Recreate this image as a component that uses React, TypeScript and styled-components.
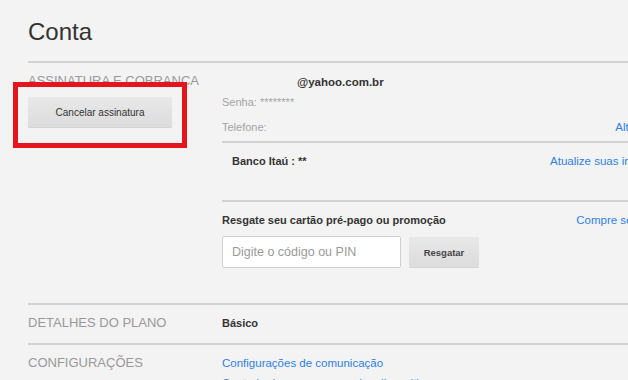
import React from "react";
import styled, { createGlobalStyle } from "styled-components";

const Global = createGlobalStyle`
  html, body {
    margin: 0;
    padding: 0;
    background: #f3f3f3;
    overflow: hidden;
  }
  body {
    font-family: "Liberation Sans", Arial, sans-serif;
    color: #333;
  }
`;

const Page = styled.div`
  width: 733px;
  padding-left: 28px;
`;

const Header = styled.header`
  padding: 17px 0 14px;
  border-bottom: 2px solid #d2d2d2;
`;

const Title = styled.h1`
  margin: 0;
  font-size: 24px;
  line-height: 30px;
  font-weight: 400;
  color: #333;
`;

const Section = styled.section<{ $top: number; $bottom?: number }>`
  display: grid;
  grid-template-columns: 194px 539px;
  border-bottom: 2px solid #d2d2d2;
  padding-top: ${(p) => p.$top}px;
  padding-bottom: ${(p) => p.$bottom ?? 0}px;
`;

const SideCol = styled.div`
  display: flex;
  flex-direction: column;
  align-items: flex-start;
`;

const SectionLabel = styled.h2`
  margin: 0;
  font-size: 13px;
  line-height: 18px;
  font-weight: 400;
  color: #999;
  white-space: nowrap;
`;

const CancelWrap = styled.div`
  position: relative;
  margin-top: 7px;
`;

const PlainButton = styled.button<{ $w: number; $h: number }>`
  display: flex;
  align-items: center;
  justify-content: center;
  width: ${(p) => p.$w}px;
  height: ${(p) => p.$h}px;
  padding: 0;
  border: 0;
  border-radius: 1px;
  background: linear-gradient(180deg, #e8e8e8 0%, #dcdcdc 100%);
  box-shadow: 0 1px 0 rgba(0, 0, 0, 0.12);
  font-family: "Liberation Sans", Arial, sans-serif;
  font-size: 10px;
  color: #333;
  cursor: pointer;
`;

const Highlight = styled.div`
  position: absolute;
  left: -15px;
  top: -15px;
  width: 174px;
  height: 66px;
  box-sizing: border-box;
  border: 5px solid #e3161d;
  pointer-events: none;
`;

const Body = styled.div`
  display: flex;
  flex-direction: column;
`;

const Group = styled.div<{ $pt: number; $pb: number; $line?: boolean }>`
  display: flex;
  flex-direction: column;
  padding: ${(p) => `${p.$pt}px 0 ${p.$pb}px`};
  border-bottom: ${(p) => (p.$line ? "2px solid #d2d2d2" : "0")};
`;

const Row = styled.div<{ $mt?: number; $indent?: number; $h?: number }>`
  display: flex;
  align-items: center;
  justify-content: space-between;
  height: ${(p) => p.$h ?? 20}px;
  margin-top: ${(p) => p.$mt ?? 0}px;
  padding-left: ${(p) => p.$indent ?? 0}px;
  white-space: nowrap;
`;

const Strong = styled.span<{ $size?: number }>`
  font-size: ${(p) => p.$size ?? 11}px;
  font-weight: 700;
  color: #333;
`;

const Muted = styled.span`
  font-size: 11px;
  color: #a3a3a3;
`;

const Redacted = styled.span`
  display: inline-block;
  width: 75px;
`;

const Link = styled.a`
  font-size: 11.5px;
  color: #2f7fe0;
  text-decoration: none;
  cursor: pointer;
  white-space: nowrap;
`;

const RedeemForm = styled.div`
  display: flex;
  align-items: center;
  gap: 8px;
  margin-top: 6px;
`;

const CodeInput = styled.input`
  width: 179px;
  height: 32px;
  box-sizing: border-box;
  padding: 0 9px;
  border: 1px solid #cfcfcf;
  border-radius: 2px;
  background: #fff;
  font-family: "Liberation Sans", Arial, sans-serif;
  font-size: 12.5px;
  color: #333;
  &::placeholder {
    color: #9a9a9a;
  }
`;

const RedeemButton = styled(PlainButton)`
  font-weight: 700;
  font-size: 9.5px;
  color: #444;
`;

export default function App() {
  return (
    <>
      <Global />
      <Page>
        <Header>
          <Title>Conta</Title>
        </Header>

        <Section $top={9}>
          <SideCol>
            <SectionLabel>ASSINATURA E COBRANÇA</SectionLabel>
            <CancelWrap>
              <PlainButton $w={144} $h={30}>Cancelar assinatura</PlainButton>
              <Highlight />
            </CancelWrap>
          </SideCol>
          <Body>
            <Group $pt={0} $pb={4} $line>
              <Row>
                <Strong $size={11.5}>
                  <Redacted />
                  @yahoo.com.br
                </Strong>
                <Link>Alterar email da conta</Link>
              </Row>
              <Row>
                <Muted>Senha: ********</Muted>
                <Link>Alterar senha</Link>
              </Row>
              <Row $mt={5}>
                <Muted>Telefone:</Muted>
                <Link>Alterar o número de telefone</Link>
              </Row>
            </Group>
            <Group $pt={8} $pb={29} $line>
              <Row $indent={10}>
                <Strong>Banco Itaú : **</Strong>
                <Link>Atualize suas informações de pagamento</Link>
              </Row>
            </Group>
            <Group $pt={8} $pb={35}>
              <Row>
                <Strong>Resgate seu cartão pré-pago ou promoção</Strong>
                <Link>Compre seu cartão pré-pago on-line</Link>
              </Row>
              <RedeemForm>
                <CodeInput placeholder="Digite o código ou PIN" />
                <RedeemButton $w={70} $h={30}>Resgatar</RedeemButton>
              </RedeemForm>
            </Group>
          </Body>
        </Section>

        <Section $top={9} $bottom={11}>
          <SectionLabel>DETALHES DO PLANO</SectionLabel>
          <Body>
            <Row $h={18}>
              <Strong>Básico</Strong>
            </Row>
          </Body>
        </Section>

        <Section $top={9}>
          <SectionLabel>CONFIGURAÇÕES</SectionLabel>
          <Body>
            <Row $h={18}>
              <Link>Configurações de comunicação</Link>
            </Row>
            <Row $h={18} $mt={2}>
              <Link>Controle de acesso e uso dos dispositivos</Link>
            </Row>
          </Body>
        </Section>
      </Page>
    </>
  );
}
